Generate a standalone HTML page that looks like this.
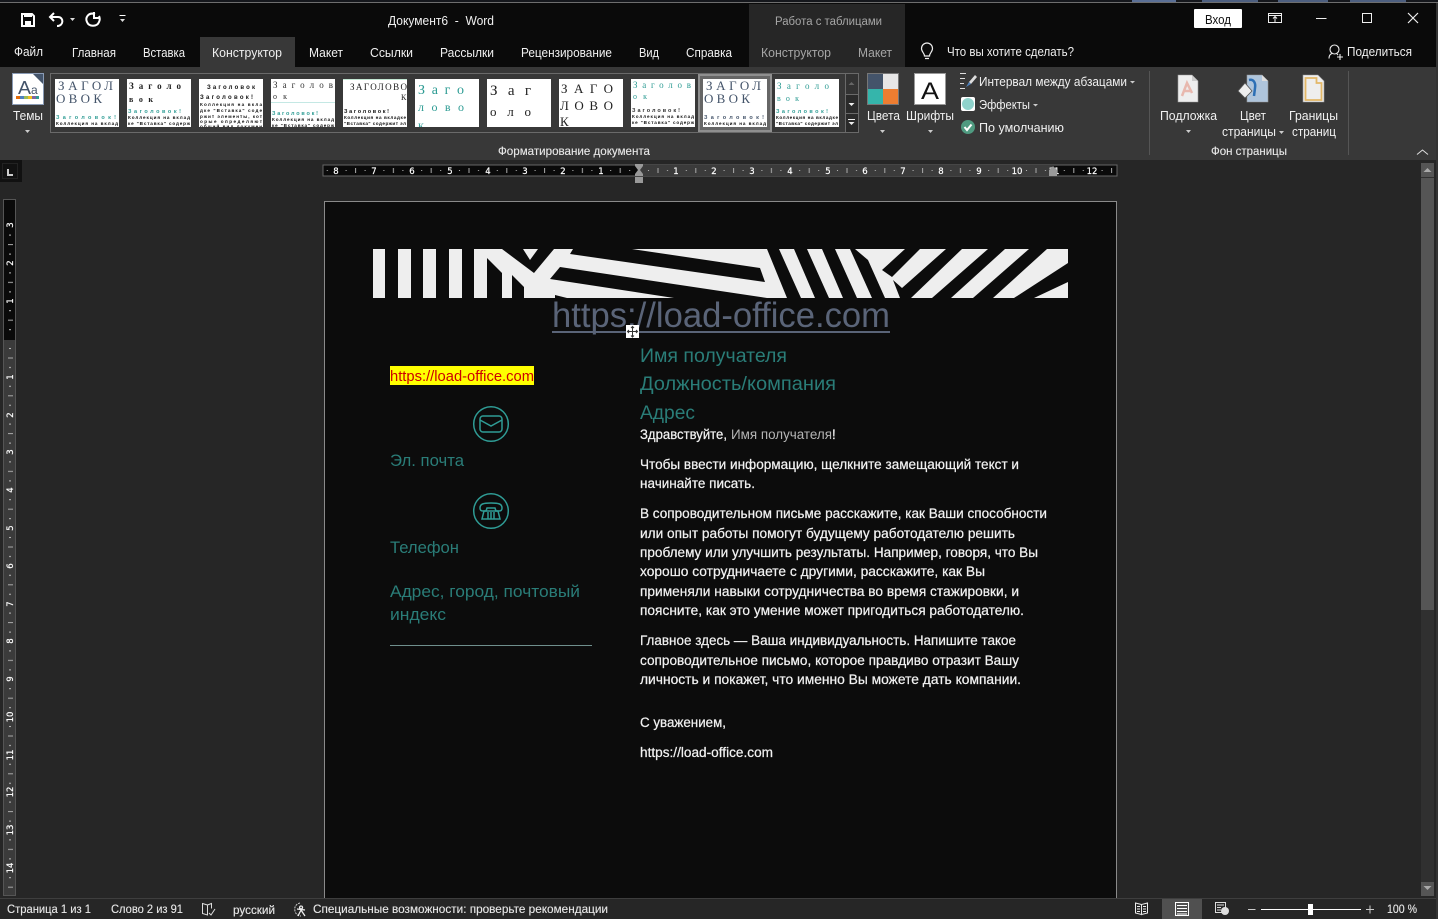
<!DOCTYPE html>
<html><head><meta charset="utf-8"><title>Документ6 - Word</title>
<style>
html,body{margin:0;padding:0;background:#262626;width:1438px;height:919px;overflow:hidden}
svg{display:block}
text{font-family:"Liberation Sans","DejaVu Sans",sans-serif;white-space:pre}
.u{font-size:12.5px;fill:#f0f0f0}
.c{font-size:12.5px;fill:#a6a6a6}
.s{font-size:12px;fill:#e8e8e8;stroke:#e8e8e8;stroke-width:.12px}
.b{font-size:13.5px;fill:#f2f2f2;stroke:#f2f2f2;stroke-width:.22px}
.h{font-size:19px;fill:#2a7d78}
.r{font-family:"DejaVu Sans",sans-serif;font-size:8.5px;fill:#fff;stroke:#fff;stroke-width:.2px;text-anchor:middle}
.th{font-family:"Liberation Serif",serif;font-size:13px;fill:#44546a}
.tk{font-family:"Liberation Serif",serif;font-size:12px;fill:#222}
.tt{font-size:5.5px;font-weight:bold;fill:#2e9c94}
.tb{font-size:4.6px;font-weight:bold;fill:#111}
</style></head><body>
<svg xmlns="http://www.w3.org/2000/svg" width="1438" height="919" viewBox="0 0 1438 919">
<defs>
<clipPath id="tc"><rect x="0" y="0" width="64" height="48"/></clipPath>
<pattern id="hr" patternUnits="userSpaceOnUse" x="639" y="165" width="37.8" height="11">
<rect x="9" y="5" width="1" height="1" fill="#bbb"/><rect x="18.5" y="3" width="1" height="5" fill="#aaa"/><rect x="28" y="5" width="1" height="1" fill="#bbb"/>
</pattern>
<pattern id="vr" patternUnits="userSpaceOnUse" x="3" y="339" width="13" height="37.8">
<rect x="6" y="9" width="2" height="1" fill="#bbb"/><rect x="5" y="18.5" width="5" height="1" fill="#aaa"/><rect x="6" y="28" width="2" height="1" fill="#bbb"/>
</pattern>
</defs>

<!-- base -->
<rect width="1438" height="919" fill="#262626"/>
<rect width="1438" height="3" fill="#15171c"/>
<rect x="1132" y="0" width="44" height="2" fill="#5a6f96"/><rect x="1202" y="0" width="56" height="2" fill="#4d5f80"/><rect x="1278" y="0" width="50" height="2" fill="#4d5f80"/><rect x="1350" y="0" width="56" height="2" fill="#4d5f80"/>
<rect y="2" width="1438" height="1" fill="#6e6e6e"/>
<rect y="3" width="1436" height="64" fill="#0a0a0a"/>
<rect y="67" width="1436" height="93" fill="#383838"/>
<rect x="1436" y="3" width="2" height="916" fill="#333"/>

<!-- contextual tabs -->
<rect x="749" y="4" width="156" height="63" fill="#262626"/>
<text x="775" y="25" class="c" font-size="11" textLength="107" lengthAdjust="spacingAndGlyphs" style="font-size:11.5px">Работа с таблицами</text>

<!-- QAT -->
<g fill="none" stroke="#fff">
<path d="M22 14h10l2 2v10h-12z" stroke-width="2"/>
<rect x="24" y="14" width="8" height="3" fill="#fff" stroke="none"/>
<rect x="25" y="21" width="6" height="5" fill="#fff" stroke="none"/>
<path d="M54 13l-4 4 4 4M50 17h8c6 0 6 9-1 9" stroke-width="2"/>
<path d="M95 14c-7-2-10 4-8 8 2 5 10 5 12 0 1-2 1-4 0-6M94 12v6h6" stroke-width="2"/>
<path d="M119.500 15.500h6" stroke-width="1"/>
</g>
<path d="M70 18h5l-2.500 3z" fill="#ddd"/>
<path d="M120 19h5l-2.500 3z" fill="#ddd"/>
<text x="388" y="25" class="u" textLength="106" lengthAdjust="spacingAndGlyphs">Документ6  -  Word</text>

<!-- window controls -->
<rect x="1194" y="9" width="48" height="19" rx="1" fill="#fff"/>
<text x="1205" y="24" font-size="12.5" fill="#111" textLength="26" lengthAdjust="spacingAndGlyphs">Вход</text>
<g fill="none" stroke="#eee" stroke-width="1">
<path d="M1268.500 13.500h13v9h-13zM1268.500 15.500h13M1275 22v-5M1273 18.500l2-2 2 2"/>
<path d="M1316 18.500h10.500"/>
<rect x="1362.500" y="13.500" width="9" height="9"/>
<path d="M1408 13l10 10M1418 13l-10 10" stroke-width="1.200"/>
<circle cx="1334.500" cy="49.500" r="4.500" stroke-width="1.100"/>
<path d="M1329 58.500c0-3 1.500-4.500 3-5M1337 54l1 1M1337 57h6M1340 54v6" stroke-width="1.100"/>
<path d="M924.500 56c0-3-3-4-3-7.500a5.500 5.500 0 0 1 11 0c0 3.500-3 4.500-3 7.500zM925 58.500h4" stroke-width="1.200"/>
</g>

<!-- tabs -->
<rect x="200" y="37" width="95" height="30" fill="#383838"/>
<text x="14" y="56" class="u" textLength="29" lengthAdjust="spacingAndGlyphs">Файл</text>
<text x="72" y="57" class="u" textLength="44" lengthAdjust="spacingAndGlyphs">Главная</text>
<text x="143" y="57" class="u" textLength="42" lengthAdjust="spacingAndGlyphs">Вставка</text>
<text x="212" y="57" class="u" textLength="70" lengthAdjust="spacingAndGlyphs">Конструктор</text>
<text x="309" y="57" class="u" textLength="34" lengthAdjust="spacingAndGlyphs">Макет</text>
<text x="370" y="57" class="u" textLength="43" lengthAdjust="spacingAndGlyphs">Ссылки</text>
<text x="440" y="57" class="u" textLength="54" lengthAdjust="spacingAndGlyphs">Рассылки</text>
<text x="521" y="57" class="u" textLength="91" lengthAdjust="spacingAndGlyphs">Рецензирование</text>
<text x="639" y="57" class="u" textLength="20" lengthAdjust="spacingAndGlyphs">Вид</text>
<text x="686" y="57" class="u" textLength="46" lengthAdjust="spacingAndGlyphs">Справка</text>
<text x="761" y="57" class="c" textLength="70" lengthAdjust="spacingAndGlyphs">Конструктор</text>
<text x="858" y="57" class="c" textLength="34" lengthAdjust="spacingAndGlyphs">Макет</text>
<text x="947" y="56" class="u" textLength="127" lengthAdjust="spacingAndGlyphs">Что вы хотите сделать?</text>
<text x="1347" y="56" class="u" textLength="65" lengthAdjust="spacingAndGlyphs">Поделиться</text>

<!-- Themes -->
<rect x="12.500" y="73.500" width="31" height="31" fill="#fff" stroke="#8a9bb5" stroke-width="1"/>
<path d="M33 74h10v10z" fill="#44546a"/>
<text x="18" y="94" font-size="18" fill="#44546a" textLength="13" lengthAdjust="spacingAndGlyphs">A</text>
<text x="31" y="94" font-size="12" fill="#44546a">a</text>
<rect x="16" y="96" width="4" height="3" fill="#e46c0a"/><rect x="20" y="96" width="4" height="3" fill="#4f81bd"/><rect x="24" y="96" width="4" height="3" fill="#9bbb59"/><rect x="28" y="96" width="4" height="3" fill="#f0c020"/><rect x="32" y="96" width="4" height="3" fill="#8064a2"/><rect x="36" y="96" width="3" height="3" fill="#2e9c94"/>
<text x="13" y="120" class="u" textLength="30" lengthAdjust="spacingAndGlyphs">Темы</text>
<path d="M25 130h5l-2.500 3z" fill="#ccc"/>

<!-- gallery -->
<rect x="50.500" y="73.500" width="808" height="59" fill="none" stroke="#6a6a6a"/>
<rect x="845" y="74" width="13" height="20" fill="#333"/>
<rect x="845" y="95" width="13" height="18" fill="#2a2a2a"/>
<rect x="845" y="114" width="13" height="18" fill="#2a2a2a"/>
<path d="M845.500 74v58M845 94.500h13M845 113.500h13" stroke="#6a6a6a" fill="none"/>
<path d="M848.500 85l3-3 3 3z" fill="#666"/>
<path d="M848.500 103h6l-3 3z" fill="#eee"/>
<path d="M848 119.500h7" stroke="#eee"/><path d="M848.500 122h6l-3 3z" fill="#eee"/>
<rect x="699" y="75" width="72" height="56" fill="#666" stroke="#8f8f8f" stroke-width="2"/>

<g transform="translate(55,79)"><rect width="64" height="48" fill="#fff"/><g clip-path="url(#tc)">
<text x="3" y="11" class="th" textLength="55">ЗАГОЛ</text><text x="1" y="24" class="th" textLength="46">ОВОК</text>
<text x="1" y="40" class="tt" textLength="60">Заголовок!</text><text x="1" y="46" class="tb" textLength="62">Коллекция на вклад</text></g></g>

<g transform="translate(127,79)"><rect width="64" height="48" fill="#fff"/><g clip-path="url(#tc)">
<text x="2" y="10" class="tk" style="font-size:9px;font-weight:bold" textLength="52">Заголо</text><text x="2" y="23" class="tk" style="font-size:8px;font-weight:bold" textLength="24">вок</text>
<text x="1" y="34" class="tt" textLength="53">Заголовок!</text><text x="1" y="40" class="tb" textLength="62">Коллекция на вклад</text><text x="1" y="46" class="tb" textLength="62">ке "Вставка" содерж</text></g></g>

<g transform="translate(199,79)"><rect width="64" height="48" fill="#fff"/><g clip-path="url(#tc)">
<text x="8" y="10" class="tb" style="font-size:6px" textLength="48">Заголовок</text><text x="1" y="20" class="tb" style="font-size:6px" textLength="53">Заголовок!</text>
<text x="1" y="27" class="tb" textLength="62">Коллекция на вкла</text><text x="1" y="33" class="tb" textLength="62">дке "Вставка" соде</text><text x="1" y="39" class="tb" textLength="62">ржит элементы, кот</text><text x="1" y="44" class="tb" textLength="62">орые определяют</text><text x="1" y="49" class="tb" textLength="62">общий вид докумен</text></g></g>

<g transform="translate(271,79)"><rect width="64" height="48" fill="#fff"/><g clip-path="url(#tc)">
<text x="2" y="9" class="tk" style="font-size:9px;fill:#333" textLength="60">Заголов</text><text x="2" y="20" class="tk" style="font-size:8px;fill:#333" textLength="14">ок</text>
<rect y="23" width="64" height="1" fill="#c4e8e4"/>
<text x="1" y="36" class="tt" textLength="46">Заголовок!</text><text x="1" y="42" class="tb" textLength="62">Коллекция на вклад</text><text x="1" y="48" class="tb" textLength="62">ке "Вставка" содерж</text></g></g>

<g transform="translate(343,79)"><rect width="64" height="48" fill="#fff"/><g clip-path="url(#tc)">
<rect width="64" height="1" fill="#c4e8d4"/>
<text x="7" y="11" class="tk" style="font-size:9px" textLength="57">ЗАГОЛОВО</text><text x="58" y="21" class="tk" style="font-size:8px">К</text>
<text x="1" y="34" class="tb" style="font-size:5.500px" textLength="45">Заголовок!</text><text x="1" y="40" class="tb" textLength="62">Коллекция на вкладке</text><text x="1" y="46" class="tb" textLength="62">"Вставка" содержит эл</text></g></g>

<g transform="translate(415,79)"><rect width="64" height="48" fill="#fff"/><g clip-path="url(#tc)">
<text x="3" y="15" class="th" style="font-size:14px;fill:#2e9c94" textLength="46">З а г о</text><text x="3" y="32" class="th" style="font-size:12px;fill:#2e9c94" textLength="46">л о в о</text><text x="3" y="50" class="th" style="font-size:12px;fill:#2e9c94">к</text></g></g>

<g transform="translate(487,79)"><rect width="64" height="48" fill="#fff"/><g clip-path="url(#tc)">
<text x="3" y="16" class="tk" style="font-size:15px" textLength="41">З а г</text><text x="3" y="37" class="tk" style="font-size:13px" textLength="41">о л о</text></g></g>

<g transform="translate(559,79)"><rect width="64" height="48" fill="#fff"/><g clip-path="url(#tc)">
<text x="2" y="14" class="tk" style="font-size:13px" textLength="52">ЗАГО</text><text x="1" y="31" class="tk" style="font-size:13px" textLength="53">ЛОВО</text><text x="1" y="47" class="tk" style="font-size:13px">К</text></g></g>

<g transform="translate(631,79)"><rect width="64" height="48" fill="#fff"/><g clip-path="url(#tc)">
<text x="2" y="9" class="th" style="font-size:9px;fill:#2e9c94" textLength="58">Заголов</text><text x="2" y="20" class="th" style="font-size:8px;fill:#2e9c94" textLength="14">ок</text>
<text x="1" y="33" class="tb" style="fill:#333;font-size:5.500px" textLength="48">Заголовок!</text><text x="1" y="39" class="tb" textLength="62">Коллекция на вклад</text><text x="1" y="45" class="tb" textLength="62">ке "Вставка" содерж</text></g></g>

<g transform="translate(703,79)"><rect width="64" height="48" fill="#fff"/><g clip-path="url(#tc)">
<text x="3" y="11" class="th" textLength="55">ЗАГОЛ</text><text x="1" y="24" class="th" textLength="46">ОВОК</text>
<text x="1" y="40" class="tt" style="fill:#44546a" textLength="60">Заголовок!</text><text x="1" y="46" class="tb" textLength="62">Коллекция на вклад</text></g></g>

<g transform="translate(775,79)"><rect width="64" height="48" fill="#fff"/><g clip-path="url(#tc)">
<text x="2" y="10" class="th" style="font-size:9px;fill:#2e9c94" textLength="52">Заголо</text><text x="2" y="22" class="th" style="font-size:8px;fill:#2e9c94" textLength="22">вок</text>
<text x="1" y="34" class="tt" textLength="52">Заголовок!</text><text x="1" y="40" class="tb" textLength="62">Коллекция на вкладке</text><text x="1" y="46" class="tb" textLength="62">"Вставка" содержит эл</text></g></g>

<!-- colors / fonts -->
<rect x="867" y="73" width="32" height="32" fill="#777"/>
<rect x="868" y="74" width="15" height="15" fill="#44546a"/><rect x="883" y="74" width="15" height="15" fill="#e7e6e6"/>
<rect x="868" y="89" width="15" height="15" fill="#35b5ab"/><rect x="883" y="89" width="15" height="15" fill="#ed7d31"/>
<rect x="914.500" y="73.500" width="31" height="31" fill="#fff" stroke="#999"/>
<text x="921" y="99" font-size="24" fill="#111" textLength="18" lengthAdjust="spacingAndGlyphs">А</text>
<text x="867" y="120" class="u" textLength="33" lengthAdjust="spacingAndGlyphs">Цвета</text>
<text x="906" y="120" class="u" textLength="48" lengthAdjust="spacingAndGlyphs">Шрифты</text>
<path d="M880 130h5l-2.500 3zM928 130h5l-2.500 3z" fill="#ccc"/>

<!-- para spacing etc -->
<path d="M960 73.500h6M960 78.500h5M960 83.500h4M960 88.500h5" stroke="#ddd" fill="none"/>
<path d="M975 75l-6 7 2 2 6-7z" fill="#ddd"/><path d="M969 82l-3 5 5-3z" fill="#4f81bd"/>
<text x="979" y="86" class="u" textLength="148" lengthAdjust="spacingAndGlyphs">Интервал между абзацами</text>
<path d="M1130 81h5l-2.500 2.500z" fill="#ccc"/>
<rect x="961" y="97" width="14" height="14" rx="2" fill="#fff"/><circle cx="968" cy="104" r="6" fill="#8fd3cc"/>
<text x="979" y="109" class="u" textLength="51" lengthAdjust="spacingAndGlyphs">Эффекты</text>
<path d="M1033 104h5l-2.500 2.500z" fill="#ccc"/>
<circle cx="968" cy="127" r="7" fill="#4f9a80"/><path d="M964.500 127l2.500 3 4.500-5.500" stroke="#fff" stroke-width="2" fill="none"/>
<text x="979" y="132" class="u" textLength="85" lengthAdjust="spacingAndGlyphs">По умолчанию</text>

<path d="M1149.500 71v84M1348.500 71v84" stroke="#555"/>

<!-- page bg -->
<path d="M1178 75h14l6 6v21h-20z" fill="#eee" stroke="#999" stroke-width=".6"/>
<path d="M1192 75v6h6" fill="#ccc"/>
<path d="M1182 96l5-13 5 10M1184 91h6" stroke="#e8b8ae" stroke-width="2.500" fill="none"/>
<path d="M1247 75h15l6 6v21h-21z" fill="#afc5dc" stroke="#999" stroke-width=".6"/>
<path d="M1262 75v6h6" fill="#ddd"/>
<path d="M1238 91l7-8 7 8-7 7z" fill="#eee" stroke="#555" stroke-width=".8"/>
<path d="M1249 80c4-1 7 2 6 8l-1 8" stroke="#2c6fb5" stroke-width="2.500" fill="none"/>
<path d="M1303 75h15l6 6v21h-21z" fill="#eee" stroke="#999" stroke-width=".6"/>
<path d="M1305.500 78h11v5h5v17h-16z" fill="none" stroke="#e3b868" stroke-width="1.800"/>
<text x="1160" y="120" class="u" textLength="57" lengthAdjust="spacingAndGlyphs">Подложка</text>
<path d="M1186 130h5l-2.500 3z" fill="#ccc"/>
<text x="1240" y="120" class="u" textLength="26" lengthAdjust="spacingAndGlyphs">Цвет</text>
<text x="1222" y="136" class="u" textLength="54" lengthAdjust="spacingAndGlyphs">страницы</text>
<path d="M1279 131h5l-2.500 3z" fill="#ccc"/>
<text x="1289" y="120" class="u" textLength="49" lengthAdjust="spacingAndGlyphs">Границы</text>
<text x="1292" y="136" class="u" textLength="44" lengthAdjust="spacingAndGlyphs">страниц</text>
<text x="498" y="155" class="s" textLength="152" lengthAdjust="spacingAndGlyphs">Форматирование документа</text>
<text x="1211" y="155" class="s" textLength="76" lengthAdjust="spacingAndGlyphs">Фон страницы</text>
<path d="M1417 154.500l5.500-4.500 5.500 4.500" stroke="#ddd" fill="none"/>

<!-- ruler corner -->
<rect x="0" y="160" width="22" height="22" fill="#111"/>
<rect x="2.500" y="163.500" width="15" height="15" fill="none" stroke="#222"/>
<path d="M7 169v7h6v-2h-4v-5z" fill="#ccc"/>

<!-- h ruler -->
<rect x="323" y="165" width="794" height="11" fill="#0a0a0a" stroke="#666" stroke-width="1"/>
<rect x="639" y="165" width="413" height="11" fill="#3b3b3b"/>
<rect x="324" y="165" width="792" height="11" fill="url(#hr)"/>
<g>
<text class="r" x="336" y="174">8</text><text class="r" x="374" y="174">7</text><text class="r" x="412" y="174">6</text><text class="r" x="450" y="174">5</text><text class="r" x="488" y="174">4</text><text class="r" x="525" y="174">3</text><text class="r" x="563" y="174">2</text><text class="r" x="601" y="174">1</text>
<text class="r" x="676" y="174">1</text><text class="r" x="714" y="174">2</text><text class="r" x="752" y="174">3</text><text class="r" x="790" y="174">4</text><text class="r" x="828" y="174">5</text><text class="r" x="865" y="174">6</text><text class="r" x="903" y="174">7</text><text class="r" x="941" y="174">8</text><text class="r" x="979" y="174">9</text><text class="r" x="1017" y="174">10</text><text class="r" x="1054" y="174">11</text><text class="r" x="1092" y="174">12</text>
</g>
<path d="M635 164h8v2l-3 4 3 4v2h-8v-2l3-4-3-4z" fill="#999"/>
<rect x="635" y="177" width="8" height="6" fill="#999"/>
<path d="M1049 170l4-4 4 4v6h-8z" fill="#999"/>

<!-- v ruler -->
<rect x="3.500" y="199.500" width="12" height="696" fill="#0a0a0a" stroke="#555"/>
<rect x="4" y="340" width="11" height="555" fill="#3b3b3b"/>
<rect x="4" y="225" width="11" height="670" fill="url(#vr)"/>
<g>
<text class="r" transform="translate(13,225) rotate(-90)">3</text><text class="r" transform="translate(13,263) rotate(-90)">2</text><text class="r" transform="translate(13,301) rotate(-90)">1</text>
<text class="r" transform="translate(13,377) rotate(-90)">1</text><text class="r" transform="translate(13,415) rotate(-90)">2</text><text class="r" transform="translate(13,452) rotate(-90)">3</text><text class="r" transform="translate(13,490) rotate(-90)">4</text><text class="r" transform="translate(13,528) rotate(-90)">5</text><text class="r" transform="translate(13,566) rotate(-90)">6</text><text class="r" transform="translate(13,604) rotate(-90)">7</text><text class="r" transform="translate(13,641) rotate(-90)">8</text><text class="r" transform="translate(13,679) rotate(-90)">9</text><text class="r" transform="translate(13,717) rotate(-90)">10</text><text class="r" transform="translate(13,755) rotate(-90)">11</text><text class="r" transform="translate(13,792) rotate(-90)">12</text><text class="r" transform="translate(13,830) rotate(-90)">13</text><text class="r" transform="translate(13,868) rotate(-90)">14</text>
</g>

<!-- scrollbar -->
<rect x="1421" y="163" width="13" height="733" fill="#303030"/>
<rect x="1421" y="163" width="13" height="14" fill="#555"/>
<path d="M1423.500 172l4-4 4 4z" fill="#aaa"/>
<rect x="1421" y="178" width="13" height="432" fill="#555"/>
<rect x="1421" y="882" width="13" height="14" fill="#555"/>
<path d="M1423.500 886h8l-4 4z" fill="#aaa"/>

<!-- page -->
<rect x="324.500" y="201.500" width="792" height="720" fill="#0c0c0c" stroke="#8a8a8a"/>

<!-- banner -->
<g fill="#eeeeee">
<rect x="373" y="249" width="12" height="49"/><rect x="398" y="249" width="13" height="49"/><rect x="423" y="249" width="13" height="49"/><rect x="449" y="249" width="13" height="49"/>
<rect x="474" y="249" width="594" height="49"/>
</g>
<g fill="#0c0c0c">
<path d="M487 258L502 273V298H487z"/>
<path d="M512 275L524 287V298H512z"/>
<path d="M502 249H523L530 260L538 249H554L534 273z"/>
<path d="M573 249H632L760 268L765 282L570 254z"/>
<path d="M560 267L767 298H674L550 279z"/>
<path d="M555 295L567 298H555z"/>
<path d="M767 249H779L801 298H787z"/>
<path d="M794 249H807L829 298H815z"/>
<path d="M822 249H835L857 298H843z"/>
<path d="M850 249H855L868 260L885 298H872z"/>
<path d="M905 249H920L892 277L882 270z"/>
<path d="M946 249H962L911 298H900L893 280L902 288z"/>
<path d="M988 249H1005L951 298H932z"/>
<path d="M1029 249H1047L993 298H973z"/>
<path d="M1014 298L1068 263V282L1034 298z"/>
</g>

<!-- url title -->
<text x="552" y="327" font-size="35" fill="#5a6478" textLength="338" lengthAdjust="spacingAndGlyphs">https://load-office.com</text>
<rect x="552" y="331" width="338" height="2" fill="#5a6478"/>
<rect x="626" y="325" width="13" height="13" fill="#fff"/>
<path d="M632.500 326.500v11M627.500 331.500h10M631 328l1.500-1.500 1.500 1.500M631 335.500l1.500 1.500 1.500-1.500M629 330l-1.500 1.500 1.500 1.500M636 330l1.500 1.500-1.500 1.500" stroke="#333" fill="none"/>

<!-- left col -->
<rect x="390" y="366" width="144" height="19" fill="#ffff00"/>
<text x="390" y="381" font-size="15" fill="#cc0000" textLength="144" lengthAdjust="spacingAndGlyphs">https://load-office.com</text>
<g fill="none" stroke="#2f9c95" stroke-width="1.500">
<circle cx="491" cy="424" r="17.300"/>
<rect x="480" y="416" width="22" height="16" rx="3"/>
<path d="M480 420l11 6 11-6"/>
<circle cx="491" cy="511" r="17.300"/>
<path d="M480 508c0-4 3-5 11-5s11 1 11 5c0 2-1 3-3 3h-3l-1-3h-8l-1 3h-3c-2 0-3-1-3-3z"/>
<path d="M484 511l-2 8h18l-2-8z"/>
</g>
<path d="M488 512v7M491 512v7M494 512v7" stroke="#2f9c95" stroke-width="1.500"/>
<text x="390" y="466" class="h" style="font-size:17px" textLength="74" lengthAdjust="spacingAndGlyphs">Эл. почта</text>
<text x="390" y="553" class="h" style="font-size:17px" textLength="69" lengthAdjust="spacingAndGlyphs">Телефон</text>
<text x="390" y="597" class="h" style="font-size:17px" textLength="190" lengthAdjust="spacingAndGlyphs">Адрес, город, почтовый</text>
<text x="390" y="620" class="h" style="font-size:17px" textLength="56" lengthAdjust="spacingAndGlyphs">индекс</text>
<rect x="390" y="645" width="202" height="1" fill="#6f8f8d"/>

<!-- right col -->
<text x="640" y="362" class="h" textLength="147" lengthAdjust="spacingAndGlyphs">Имя получателя</text>
<text x="640" y="390" class="h" textLength="196" lengthAdjust="spacingAndGlyphs">Должность/компания</text>
<text x="640" y="419" class="h" textLength="55" lengthAdjust="spacingAndGlyphs">Адрес</text>
<text x="640" y="439" class="b" textLength="87" lengthAdjust="spacingAndGlyphs">Здравствуйте,</text>
<text x="731" y="439" class="b" style="fill:#b5b5b5;stroke:none" textLength="101" lengthAdjust="spacingAndGlyphs">Имя получателя</text>
<text x="832" y="439" class="b">!</text>
<text x="640" y="469" class="b" textLength="379" lengthAdjust="spacingAndGlyphs">Чтобы ввести информацию, щелкните замещающий текст и</text>
<text x="640" y="488" class="b" textLength="115" lengthAdjust="spacingAndGlyphs">начинайте писать.</text>
<text x="640" y="518" class="b" textLength="407" lengthAdjust="spacingAndGlyphs">В сопроводительном письме расскажите, как Ваши способности</text>
<text x="640" y="538" class="b" textLength="375" lengthAdjust="spacingAndGlyphs">или опыт работы помогут будущему работодателю решить</text>
<text x="640" y="557" class="b" textLength="398" lengthAdjust="spacingAndGlyphs">проблему или улучшить результаты. Например, говоря, что Вы</text>
<text x="640" y="576" class="b" textLength="345" lengthAdjust="spacingAndGlyphs">хорошо сотрудничаете с другими, расскажите, как Вы</text>
<text x="640" y="596" class="b" textLength="379" lengthAdjust="spacingAndGlyphs">применяли навыки сотрудничества во время стажировки, и</text>
<text x="640" y="615" class="b" textLength="384" lengthAdjust="spacingAndGlyphs">поясните, как это умение может пригодиться работодателю.</text>
<text x="640" y="645" class="b" textLength="376" lengthAdjust="spacingAndGlyphs">Главное здесь — Ваша индивидуальность. Напишите такое</text>
<text x="640" y="665" class="b" textLength="379" lengthAdjust="spacingAndGlyphs">сопроводительное письмо, которое правдиво отразит Вашу</text>
<text x="640" y="684" class="b" textLength="381" lengthAdjust="spacingAndGlyphs">личность и покажет, что именно Вы можете дать компании.</text>
<text x="640" y="727" class="b" textLength="86" lengthAdjust="spacingAndGlyphs">С уважением,</text>
<text x="640" y="757" class="b" textLength="133" lengthAdjust="spacingAndGlyphs">https://load-office.com</text>

<!-- status bar -->
<rect x="0" y="898" width="1436" height="21" fill="#262626"/>
<rect x="0" y="898" width="1436" height="1" fill="#3e3e3e"/>
<rect x="1162" y="899" width="40" height="20" fill="#505050"/>
<text x="7" y="913" class="s" textLength="84" lengthAdjust="spacingAndGlyphs">Страница 1 из 1</text>
<text x="111" y="913" class="s" textLength="72" lengthAdjust="spacingAndGlyphs">Слово 2 из 91</text>
<path d="M202.500 903.500l5 1.500 0 10-5-1.500zM207.500 905l4-1.500v5M209 913l2 2 4-6" stroke="#ddd" fill="none"/>
<text x="233" y="914" class="s" textLength="42" lengthAdjust="spacingAndGlyphs">русский</text>
<path d="M300 903c-4 1-6 4-5 8s4 5 6 5" stroke="#ccc" fill="none" stroke-dasharray="2 1"/>
<path d="M301 906a1.500 1.500 0 1 0 .1 0M297 909l8 1M301 910l-3 6M301 910l4 6" stroke="#eee" stroke-width="1.300" fill="none"/>
<text x="313" y="913" class="s" textLength="295" lengthAdjust="spacingAndGlyphs">Специальные возможности: проверьте рекомендации</text>
<path d="M1135.500 903l6 1.500v10l-6-1.500zM1147.500 903l-6 1.500v10l6-1.500zM1137 906.500h3M1137 909h3M1137 911.500h3M1143 906.500h3M1143 909h3M1143 911.500h3" stroke="#eee" fill="none"/>
<rect x="1175.500" y="902.500" width="13" height="13" fill="none" stroke="#fff"/>
<path d="M1177 905.500h10M1177 908.500h10M1177 911.500h10M1177 914h10" stroke="#fff" fill="none"/>
<path d="M1215.500 902.500h10v10h-10zM1217 905h7M1217 907.500h4M1217 910h4" stroke="#ddd" fill="none"/>
<circle cx="1225" cy="911" r="4" fill="#ddd"/>
<path d="M1248 909.500h7.500" stroke="#ccc"/>
<rect x="1261" y="909" width="100" height="1" fill="#fff"/>
<rect x="1308" y="904" width="5" height="11" fill="#fff"/>
<path d="M1366 909.500h8M1370 905.500v8" stroke="#ccc"/>
<text x="1387" y="913" class="s" textLength="30" lengthAdjust="spacingAndGlyphs">100 %</text>
</svg>
</body></html>
